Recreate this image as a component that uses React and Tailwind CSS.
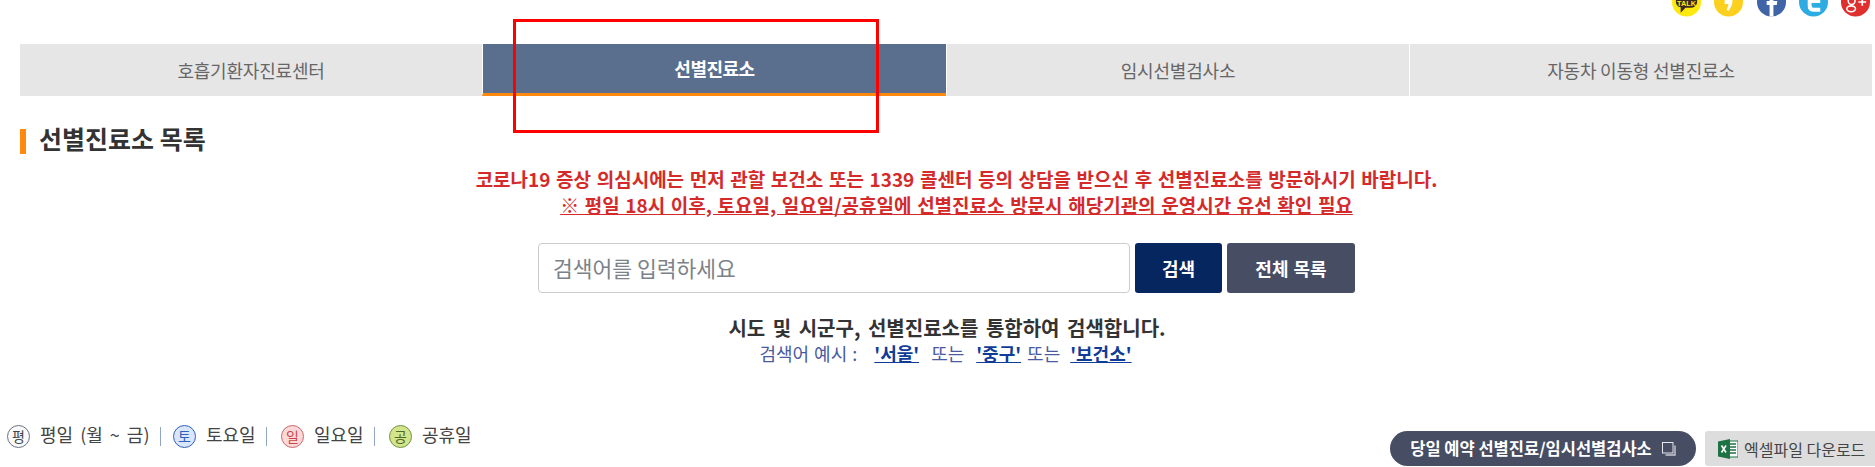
const font = "font-['Noto_Sans_CJK_KR','Noto_Sans',sans-serif]";

function SocialIcons() {
  return (
    <div className="flex justify-end items-end h-[17px] gap-[13.25px] pr-[5px] overflow-hidden">
      <svg width="29" height="30" viewBox="0 0 30 30" className="shrink-0">
        <circle cx="15" cy="15" r="15" fill="#fde910" />
        <path d="M10 5h10a6 6 0 0 1 6 6v4a6 6 0 0 1-6 6h-6l-5 5v-5.500a6 6 0 0 1-5-5.500v-4a6 6 0 0 1 6-6z" fill="#3b2a1e" />
        <text x="15" y="19" textAnchor="middle" fontSize="7.500" fontWeight="700" fill="#fde910" fontFamily="Liberation Sans">TALK</text>
      </svg>
      <svg width="29" height="30" viewBox="0 0 30 30" className="shrink-0">
        <circle cx="15" cy="15" r="15" fill="#fdd01f" />
        <path d="M11 12h8c.5 5-1 8-4 12l-2-1c1-3 2-4 2-6h-4z" fill="#fff" />
      </svg>
      <svg width="29" height="30" viewBox="0 0 30 30" className="shrink-0">
        <circle cx="15" cy="15" r="15" fill="#3f64a8" />
        <path d="M13 30V18h-3v-4h3v-3c0-3 2-5 5-5h3v4h-2c-1 0-2 .5-2 2v2h4l-.5 4H17v12z" fill="#fff" />
      </svg>
      <svg width="29" height="30" viewBox="0 0 30 30" className="shrink-0">
        <circle cx="15" cy="15" r="15" fill="#2cace3" />
        <path d="M9 6h4v6h9v4h-9v2c0 2 1 3 3 3h6v4h-7c-4 0-6-2-6-6z" fill="#fff" />
      </svg>
      <svg width="29" height="30" viewBox="0 0 30 30" className="shrink-0">
        <circle cx="15" cy="15" r="15" fill="#e02f2f" />
        <circle cx="11" cy="14" r="3.500" fill="none" stroke="#fff" strokeWidth="1.600" />
        <ellipse cx="10.500" cy="22" rx="4.500" ry="3" fill="none" stroke="#fff" strokeWidth="1.600" />
        <path d="M22 11v8M18 15h8" stroke="#fff" strokeWidth="1.800" />
      </svg>
    </div>
  );
}

function Tabs() {
  const tabs = ['호흡기환자진료센터', '선별진료소', '임시선별검사소', '자동차 이동형 선별진료소'];
  return (
    <div className="flex mt-[27px] ml-[19px] h-[52px]">
      {tabs.map((t, i) => (
        <div
          key={t}
          className={
            i === 1
              ? 'w-[464px] flex items-center justify-center bg-[#5a6e8e] text-white font-bold text-[18px] tracking-[-0.5px] border-b-[3px] border-[#ff8a0d] border-l border-l-white'
              : 'w-[463px] flex items-center justify-center bg-[#e6e6e6] text-[#666] text-[18px] tracking-[-0.2px] border-l border-white'
          }
        >
          {t}
        </div>
      ))}
    </div>
  );
}

function DayBadge({ label, circle }) {
  return (
    <span className={`w-[23px] h-[23px] rounded-full border flex items-center justify-center text-[14px] shrink-0 ${circle}`}>
      {label}
    </span>
  );
}

function Legend() {
  const items = [
    { badge: '평', text: '평일 (월 ~ 금)', circle: 'border-[#6b7280] bg-[#f8fafc] text-[#444]', w: 'w-[166px]' },
    { badge: '토', text: '토요일', circle: 'border-[#2f62b8] bg-[#d9e6fb] text-[#2f62b8]', w: 'w-[108px]' },
    { badge: '일', text: '일요일', circle: 'border-[#c9686c] bg-[#fbd9d9] text-[#c9454b]', w: 'w-[108px]' },
    { badge: '공', text: '공휴일', circle: 'border-[#6f9440] bg-[#d3e48a] text-[#4f6b2a]', w: '' },
  ];
  return (
    <div className="flex items-center pl-[7px] text-[18px] [word-spacing:3px] text-[#444]">
      {items.map((it, i) => (
        <div key={it.badge} className={`flex items-center gap-[10px] ${it.w}`}>
          <DayBadge label={it.badge} circle={it.circle} />
          <span className="whitespace-nowrap pb-[4px]">{it.text}</span>
          {i < 3 && <span className="w-px h-[19px] bg-[#93a5c4]" />}
        </div>
      ))}
    </div>
  );
}

export default function App() {
  return (
    <div className={`relative w-[1875px] h-[467px] overflow-hidden bg-white ${font}`}>
      <SocialIcons />
      <Tabs />

      {/* red annotation box from the screenshot */}
      <div className="absolute left-[513px] top-[19px] w-[366px] h-[114px] border-[3px] border-[#ff0000]" />

      <h2 className="mt-[33px] ml-[20px] pl-[13px] pb-[5px] border-l-[6px] border-[#ff8a0d] h-[25px] flex items-center text-[25px] font-bold text-[#333]">
        선별진료소 목록
      </h2>

      <div className="mt-[12px] pl-[38px] text-center text-[19px] [word-spacing:1.3px] leading-[26px] font-bold text-[#d42a2a]">
        <p>코로나19 증상 의심시에는 먼저 관할 보건소 또는 1339 콜센터 등의 상담을 받으신 후 선별진료소를 방문하시기 바랍니다.</p>
        <p className="underline">※ 평일 18시 이후, 토요일, 일요일/공휴일에 선별진료소 방문시 해당기관의 운영시간 유선 확인 필요</p>
      </div>

      <div className="flex mt-[25px] ml-[538px] h-[50px] gap-[5px]">
        <input
          placeholder="검색어를 입력하세요"
          className="w-[592px] border border-[#ccc] rounded-[4px] pl-[14px] pr-[14px] text-[21.5px] placeholder:text-[#7b8288] outline-none"
        />
        <button className="w-[87px] rounded-[3px] bg-[#062660] text-white font-bold text-[18px]">검색</button>
        <button className="w-[128px] rounded-[3px] bg-[#474d63] text-white font-bold text-[18px] [word-spacing:1px]">전체 목록</button>
      </div>

      <div className="mt-[22px] text-center">
        <p className="pl-[19px] text-[20px] leading-[26px] font-bold text-[#333] [word-spacing:3px]">시도 및 시군구, 선별진료소를 통합하여 검색합니다.</p>
        <p className="text-[18px] leading-[25px] text-[#4a5aa0] pl-[16px] [word-spacing:1px]">
          검색어 예시 : <a className="ml-3 font-bold underline text-[#0f3c96]">'서울'</a>
          <span className="mx-3">또는</span>
          <a className="font-bold underline text-[#0f3c96]">'중구'</a>
          <span className="mx-[6px]">또는</span>
          <a className="ml-1 font-bold underline text-[#0f3c96]">'보건소'</a>
        </p>
      </div>

      <div className="absolute inset-x-0 bottom-[1px] flex items-end justify-between">
        <div className="mb-[14px]">
          <Legend />
        </div>
        <div className="flex gap-[9px] h-[35px]">
          <div className="w-[306px] rounded-full bg-[#474d63] text-white font-bold text-[16.5px] flex items-center justify-center gap-[10px]">
            당일 예약 선별진료/임시선별검사소
            <svg width="14" height="14" viewBox="0 0 14 14" fill="none">
              <rect x="0.500" y="0.500" width="10.500" height="10.500" stroke="#e5e7eb" fill="#474d63" />
              <path d="M13 3.500V13H3.500" stroke="#c7cad3" strokeWidth="1.400" />
            </svg>
          </div>
          <div className="w-[170px] rounded-l-[3px] bg-[#dddddd] text-[#444] text-[16px] flex items-center pl-[13px] gap-[6px]">
            <svg width="20" height="20" viewBox="0 0 20 20">
              <rect x="9" y="2" width="11" height="16" fill="#fff" stroke="#1f7244" />
              <path d="M12 5h6M12 8h6M12 11h6M12 14h6" stroke="#1f7244" strokeWidth="1.500" />
              <path d="M0 2.500 12 0v20L0 17.500z" fill="#1f7244" />
              <path d="M3.500 6.500 8 13.500M8 6.500l-4.500 7" stroke="#fff" strokeWidth="1.600" />
            </svg>
            엑셀파일 다운로드
          </div>
        </div>
      </div>
    </div>
  );
}
